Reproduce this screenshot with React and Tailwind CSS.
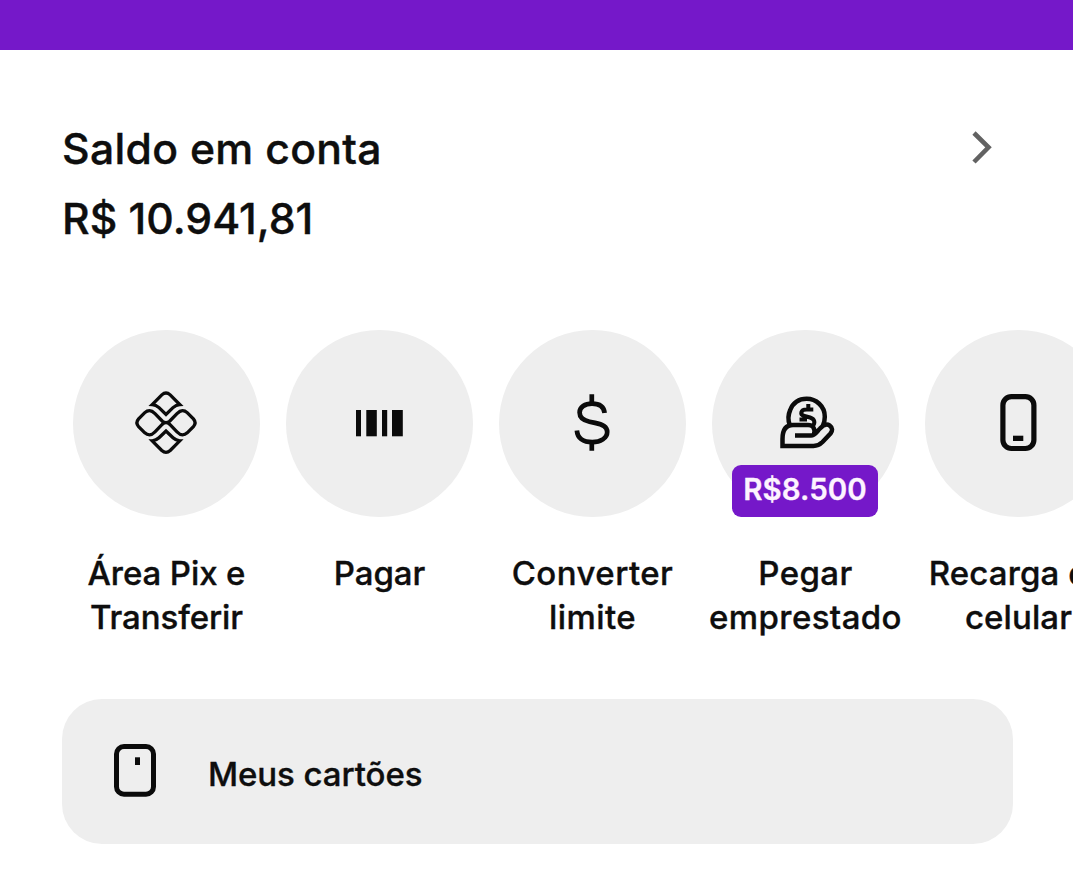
function PixIcon() {
  return (
    <svg className="overflow-visible" width="63" height="63" viewBox="0 0 63 63" fill="none" stroke="#0b0b0b" strokeWidth="3.3" strokeLinejoin="miter">
      <path d="M17.2 12.6 L26.8 2.9 Q31 -0.9 35.2 2.9 L44.8 12.6 Q41 12.8 38 15.6 L31 22.4 L24 15.6 Q21 12.8 17.2 12.6Z" />
      <path d="M17.2 48.8 L26.8 58.5 Q31 62.3 35.2 58.5 L44.8 48.8 Q41 48.6 38 45.8 L31 39 L24 45.8 Q21 48.6 17.2 48.8Z" />
      <path d="M31 30.7 Q29 30.7 27.4 29.2 L20 21.6 Q17 18.6 14.5 18.6 Q12 18.6 9.8 20.6 L3.6 26.8 Q0.2 30.7 3.6 34.6 L9.8 40.8 Q12 42.8 14.5 42.8 Q17 42.8 20 39.8 L27.4 32.2 Q29 30.7 31 30.7 Q33 30.7 34.6 29.2 L42 21.6 Q45 18.6 47.5 18.6 Q50 18.6 52.2 20.6 L58.4 26.8 Q61.8 30.7 58.4 34.6 L52.2 40.8 Q50 42.8 47.5 42.8 Q45 42.8 42 39.8 L34.6 32.2 Q33 30.7 31 30.7Z" />
    </svg>
  );
}

function BarcodeIcon() {
  return (
    <svg width="47" height="27" viewBox="0 0 47 27" fill="#0b0b0b">
      <rect x="0" y="0" width="5" height="26.3" />
      <rect x="10.3" y="0" width="10.5" height="26.3" />
      <rect x="26" y="0" width="5.2" height="26.3" />
      <rect x="36" y="0" width="10.8" height="26.3" />
    </svg>
  );
}

function DollarIcon() {
  return (
    <svg className="overflow-visible" width="37" height="57" viewBox="0 0 37 57" fill="none" stroke="#0b0b0b" strokeWidth="4.7">
      <path d="M17.8 -0.7 V8 M17.8 47 V55.8" />
      <path d="M30.6 18 C30 12 25.5 8.6 18 8.6 C11 8.6 5.6 12 5.6 17.5 C5.6 23 9.5 25.4 15.5 26.7 L21 27.9 C28.5 29.5 33.2 31.5 33.2 37 C33.2 43 26.5 47.2 18.3 47.2 C9 47.2 3.4 43 2.9 35.5" />
    </svg>
  );
}

function LoanIcon() {
  return (
    <svg className="overflow-visible" width="57" height="57" viewBox="0 0 57 57" fill="none" stroke="#0b0b0b" strokeWidth="4.5">
      <path d="M12.8 30 C11.2 26 11 20 13.2 15 C16 8 22 3.8 29.7 3.8 C39 3.8 47.8 11 47.8 21.7 C47.8 25 47.2 28 45.8 31" />
      <path d="M18 40.5 H34 C38 40.5 39.5 37 43 33.5 C46 30.3 49.5 28.4 52.5 30.3 C56 32.8 55.5 36 53.5 38.5 L45.5 47 C42.5 50 40 51 36.5 51 H5.5 V44 C5.5 35 9 30 16 30 H31 C35.5 30 38.5 33 37 39" />
      <path d="M31.3 9 V14 M36.3 14.4 H29.5 C23.5 14.4 22.5 19.6 27.5 21 L33 22.5 C38 24.2 38.5 28 35.5 31.5 M22.5 24.6 H30" strokeWidth="4" />
    </svg>
  );
}

function PhoneIcon() {
  return (
    <svg className="overflow-visible" width="37" height="57" viewBox="0 0 37 57" fill="none">
      <rect x="2.9" y="1.7" width="31" height="51.8" rx="8.5" stroke="#0b0b0b" strokeWidth="5.2" />
      <rect x="13" y="40.7" width="10.3" height="5.3" fill="#0b0b0b" />
    </svg>
  );
}

function CardIcon() {
  return (
    <svg className="-mt-[2px] shrink-0" width="42" height="53" viewBox="0 0 42 53" fill="none">
      <rect x="2.5" y="2.5" width="37" height="47.8" rx="7.5" stroke="#0b0b0b" strokeWidth="5" />
      <rect x="21" y="13.3" width="5" height="7.7" fill="#0b0b0b" />
    </svg>
  );
}

const actions = [
  { icon: PixIcon, lines: ["Área Pix e", "Transferir"], tracking: "tracking-[-0.1px]" },
  { icon: BarcodeIcon, lines: ["Pagar"], tracking: "tracking-normal" },
  { icon: DollarIcon, lines: ["Converter", "limite"], tracking: "tracking-[0.45px]" },
  { icon: LoanIcon, lines: ["Pegar", "emprestado"], tracking: "tracking-[0.4px]", badge: "R$8.500" },
  { icon: PhoneIcon, lines: ["Recarga de", "celular"], tracking: "tracking-[0.1px]" },
];

function Action({ icon: Icon, lines, tracking, badge }) {
  return (
    <button className="flex w-[213px] shrink-0 flex-col items-center">
      <span className="relative flex size-[187px] items-center justify-center rounded-full bg-[#eeeeee]">
        <Icon />
        {badge && (
          <span className="absolute bottom-0 left-[20px] flex h-[52px] w-[146px] items-center justify-center rounded-[9px] bg-[#7518c9] pb-[3px] text-[29.5px] font-semibold text-[#fdf3ff] [-webkit-text-stroke:0.3px]">
            {badge}
          </span>
        )}
      </span>
      <span className={`mt-[34px] flex flex-col items-center text-[33px] leading-[44px] font-medium whitespace-nowrap [-webkit-text-stroke:0.35px] ${tracking}`}>
        {lines.map((line) => (
          <span key={line}>{line}</span>
        ))}
      </span>
    </button>
  );
}

export default function App() {
  return (
    <div className="h-[882px] w-full overflow-hidden bg-white font-['Inter',sans-serif] text-[#0e0e0e]">
      <header className="h-[50px] bg-[#7518c9]" />
      <section className="flex justify-between pt-[64px] pr-[81px] pl-[62px]">
        <div className="text-[42.7px] leading-[70px] font-medium [-webkit-text-stroke:0.4px]">
          <h1 className="tracking-[0.3px]">Saldo em conta</h1>
          <p className="whitespace-nowrap">R$ 10.941,81</p>
        </div>
        <svg className="mt-[17px]" width="20" height="33" viewBox="0 0 20 33" fill="none" stroke="#626262" strokeWidth="4.6">
          <path d="M2 2 L16.5 16.3 L2 31" />
        </svg>
      </section>
      <nav className="mt-[76px] flex h-[309px] overflow-hidden pl-[60px]">
        {actions.map((action) => (
          <Action key={action.lines[0]} {...action} />
        ))}
      </nav>
      <button className="mt-[60px] ml-[62px] flex h-[145px] w-[951px] items-center gap-[52px] rounded-[40px] bg-[#eeeeee] pl-[52px]">
        <CardIcon />
        <span className="mt-[6px] text-[33px] font-medium tracking-[-0.08px] [-webkit-text-stroke:0.35px]">Meus cartões</span>
      </button>
    </div>
  );
}
